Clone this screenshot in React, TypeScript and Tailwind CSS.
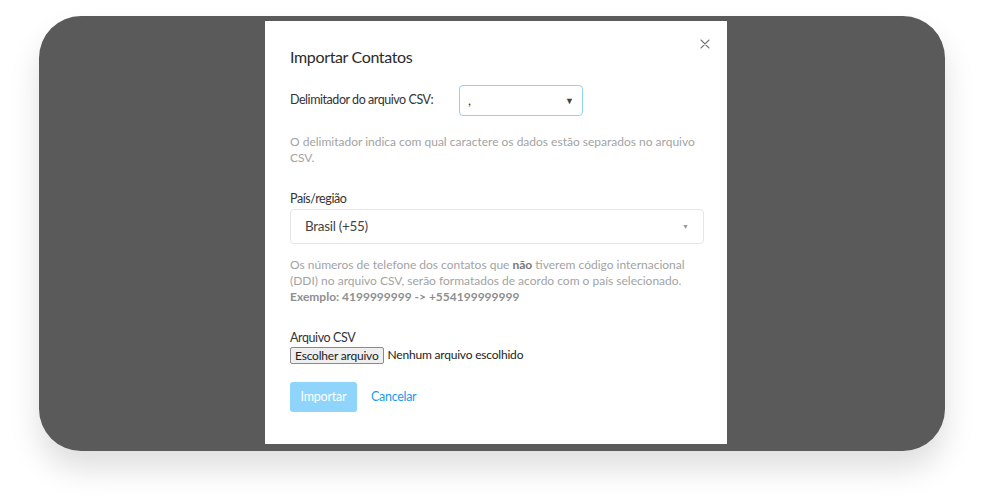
export default function App() {
  return (
    <div className="w-[989px] h-[497px] bg-white pt-4 pl-[39px]" style={{ fontFamily: 'Lato, "Noto Sans", sans-serif' }}>
      {/* Gray backdrop card */}
      <div className="w-[906px] h-[435px] rounded-[42px] bg-[#5a5a5a] shadow-[0_18px_30px_rgba(0,0,0,0.13)] pt-[5px] pl-[226px]">
        {/* Modal */}
        <div className="relative w-[462px] h-[423px] bg-white px-[25px] pt-[26px]">
          <button className="absolute right-[17px] top-[18px] text-[#777]">
            <svg width="10" height="10" viewBox="0 0 10 10" stroke="currentColor" strokeWidth="1.1" strokeLinecap="round">
              <path d="M1 1L9 9M9 1L1 9" />
            </svg>
          </button>

          <h2 className="text-[16px] tracking-[-0.35px] text-[#2b2b2b] leading-[20px]">Importar Contatos</h2>

          <div className="mt-[18px] flex items-center">
            <label className="w-[169px] text-[12.5px] tracking-[-0.45px] text-[#333]">Delimitador do arquivo CSV:</label>
            <div className="flex h-[31px] w-[124px] items-center justify-between rounded-[4px] border border-[#8fd2f6] px-2">
              <span className="text-[13px] text-[#333] leading-none">,</span>
              <span className="text-[9px] text-[#444]">▼</span>
            </div>
          </div>

          <p className="mt-[18px] text-[12px] leading-[16px] text-[#a3a3a3]">
            O delimitador indica com qual caractere os dados estão separados no arquivo CSV.
          </p>

          <label className="mt-[25px] block text-[12.5px] tracking-[-0.4px] text-[#333] leading-[16px]">País/região</label>
          <div className="mt-[2px] flex h-[35px] w-[414px] items-center justify-between rounded-[4px] border border-[#e6e6e6] pl-[14px] pr-[14px]">
            <span className="text-[13.5px] tracking-[-0.3px] text-[#444]">Brasil (+55)</span>
            <span className="text-[7px] text-[#999]">▼</span>
          </div>

          <p className="mt-[13px] text-[12px] leading-[16px] text-[#a3a3a3]">
            Os números de telefone dos contatos que <b className="text-[#777]">não</b> tiverem código internacional (DDI) no arquivo CSV, serão formatados de acordo com o país selecionado.
            <br />
            <b className="text-[#8f8f8f]">Exemplo: 4199999999 -&gt; +554199999999</b>
          </p>

          <label className="mt-[25px] block text-[12.5px] tracking-[-0.4px] text-[#333] leading-[16px]">Arquivo CSV</label>
          <div className="mt-0 flex items-center text-[12px] tracking-[-0.2px] text-[#222]">
            <span className="rounded-[2px] border border-[#8a8a8a] bg-[#efefef] px-[4px] leading-[15px]">Escolher arquivo</span>
            <span className="ml-[4px]">Nenhum arquivo escolhido</span>
          </div>

          <div className="mt-[18px] flex items-center">
            <button className="h-[30px] w-[67px] rounded-[3px] bg-[#8fd4fb] text-[12.5px] tracking-[-0.2px] text-white">Importar</button>
            <button className="ml-[14px] text-[12.5px] tracking-[-0.3px] text-[#1a9bef]">Cancelar</button>
          </div>
        </div>
      </div>
    </div>
  );
}
